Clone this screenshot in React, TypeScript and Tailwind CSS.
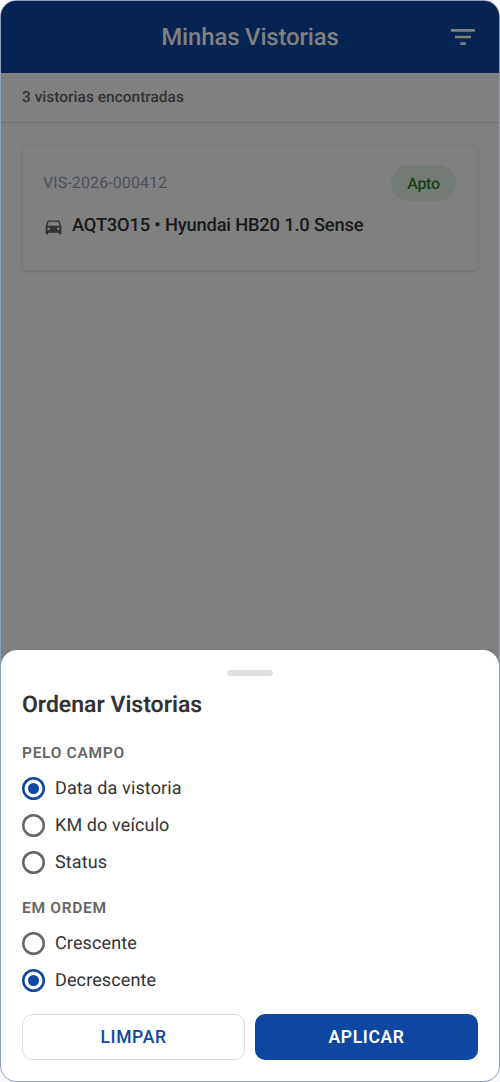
import React from "react";

function Radio({ label, checked = false }: { label: string; checked?: boolean }) {
  return (
    <label className="flex h-[37.2px] items-center">
      <span
        role="radio"
        aria-checked={checked}
        className={
          "flex h-[23px] w-[23px] items-center justify-center rounded-full " +
          (checked ? "shadow-[inset_0_0_0_2.5px_#0d47a1]" : "shadow-[inset_0_0_0_2.5px_#666666]")
        }
      >
        {checked && <span className="h-[11px] w-[11px] rounded-full bg-[#0d47a1]" />}
      </span>
      <span className="ml-[10px] text-[18px] leading-6 tracking-[0.12px] text-[#333333]">{label}</span>
    </label>
  );
}

export default function App() {
  return (
    <div className="h-[1082px] w-[500px] bg-[#f8faff] font-['Roboto',sans-serif] [text-rendering:geometricPrecision]">
      <div className="relative flex h-full w-full flex-col overflow-hidden rounded-[16px] border border-[#8d9dbb] bg-white">
        <div className="flex flex-1 flex-col bg-[#808080]">
          <header className="grid h-[72px] shrink-0 grid-cols-[72px_1fr_72px] items-center bg-[#062451]">
            <span />
            <h1 className="text-center text-[24px] font-medium leading-8 tracking-[-0.18px] text-[#808080]">Minhas Vistorias</h1>
            <svg className="ml-[20px] h-[32px] w-[32px]" viewBox="0 0 24 24" fill="#808080" aria-label="Ordenar">
              <path d="M10 18h4v-2h-4v2zM3 6v2h18V6H3zm3 7h12v-2H6v2z" />
            </svg>
          </header>
          <div className="flex h-[50px] shrink-0 items-center border-b border-[#707070] px-[21px]">
            <p className="text-[15.4px] font-medium tracking-[0.05px] text-[#333333]">3 vistorias encontradas</p>
          </div>
          <div className="mx-[21px] mt-[21px] h-[127px] rounded-[5px] border border-[#7b7b7b] px-[20px] pt-[20px] shadow-[0_1px_2px_rgba(0,0,0,0.15)]">
            <div className="flex h-[36px] items-center justify-between">
              <span className="text-[16px] tracking-[0.1px] text-[#4b515b]">VIS-2026-000412</span>
              <span className="mr-px flex h-[36px] w-[65px] items-center justify-center rounded-full bg-[#747a74] pt-px text-[16px] font-medium tracking-[-0.25px] text-[#173f19]">
                Apto
              </span>
            </div>
            <div className="mt-[11px] flex items-center">
              <svg className="mt-[2px] h-[21px] w-[21px]" viewBox="0 0 24 24" fill="#333333">
                <path d="M18.92 6.01C18.72 5.42 18.16 5 17.5 5h-11c-.66 0-1.21.42-1.42 1.01L3 12v8c0 .55.45 1 1 1h1c.55 0 1-.45 1-1v-1h12v1c0 .55.45 1 1 1h1c.55 0 1-.45 1-1v-8l-2.08-5.99zM6.5 16c-.83 0-1.5-.67-1.5-1.5S5.67 13 6.5 13s1.5.67 1.5 1.5S7.33 16 6.5 16zm11 0c-.83 0-1.5-.67-1.5-1.5s.67-1.5 1.5-1.5 1.5.67 1.5 1.5-.67 1.5-1.5 1.5zM5 11l1.5-4.5h11L19 11H5z" />
              </svg>
              <span className="ml-[8px] mt-[2px] text-[18.3px] font-medium leading-6 tracking-[-0.17px] text-[#191919]">AQT3O15 • Hyundai HB20 1.0 Sense</span>
            </div>
          </div>
        </div>

        <div className="h-[431px] shrink-0 bg-[#808080]">
          <section className="flex h-full flex-col rounded-t-[16px] bg-white px-[21px]">
            <div className="mx-auto mt-[20px] h-[6px] w-[46px] shrink-0 rounded-full bg-[#e0e0e0]" />
            <h2 className="mt-[13px] text-[23px] font-semibold leading-8 text-[#333333]">Ordenar Vistorias</h2>
            <h3 className="mt-[22px] text-[15.5px] font-semibold leading-5 tracking-[0.7px] text-[#666666]">PELO CAMPO</h3>
            <div className="mt-[7px]">
              <Radio label="Data da vistoria" checked />
              <Radio label="KM do veículo" />
              <Radio label="Status" />
            </div>
            <h3 className="mt-[16px] text-[15.5px] font-semibold leading-5 tracking-[0.7px] text-[#666666]">EM ORDEM</h3>
            <div className="mt-[7.4px]">
              <Radio label="Crescente" />
              <Radio label="Decrescente" checked />
            </div>
            <div className="mt-[14.6px] grid grid-cols-2 gap-[10px]">
              <button className="h-[46px] rounded-[10px] border border-[#dddddd] text-[17.5px] font-medium tracking-[0.65px] text-[#0d47a1]">LIMPAR</button>
              <button className="h-[46px] rounded-[10px] bg-[#0d47a1] text-[17.5px] font-semibold tracking-[0.6px] text-white">APLICAR</button>
            </div>
          </section>
        </div>
      </div>
    </div>
  );
}
